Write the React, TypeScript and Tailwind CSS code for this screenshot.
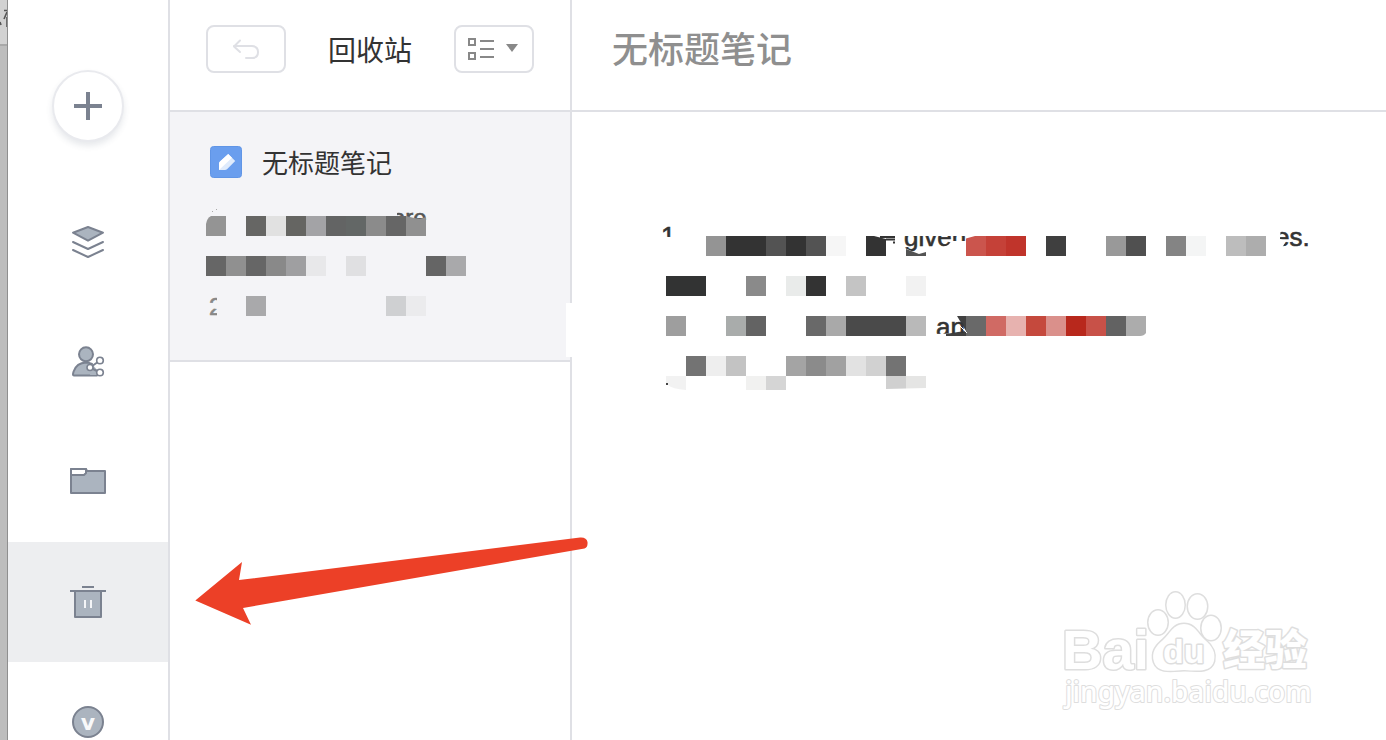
import type { ReactNode } from "react";

type Cell = [x: number, y: number, color: string, w?: number, h?: number];

const previewCells: Cell[] = [
  [246, 216, "#666664"],
  [266, 216, "#e1e1e1"],
  [286, 216, "#656562"],
  [306, 216, "#a3a3a6"],
  [326, 216, "#636464"],
  [346, 216, "#636766"],
  [366, 216, "#8b8b8b"],
  [386, 216, "#666666"],
  [206, 256, "#666666"],
  [226, 256, "#909090"],
  [246, 256, "#666666"],
  [266, 256, "#898989"],
  [286, 256, "#9f9fa1"],
  [306, 256, "#e8e8ea"],
  [346, 256, "#e0e0e2"],
  [426, 256, "#656565"],
  [446, 256, "#a9a9ab"],
  [246, 296, "#a9a9ab"],
  [386, 296, "#cfd0d2"],
  [406, 296, "#ebebed"],
];

const noteCells: Cell[] = [
  [706, 236, "#949494"],
  [726, 236, "#333333", 40],
  [766, 236, "#535353"],
  [786, 236, "#333333"],
  [806, 236, "#535353"],
  [826, 236, "#f6f6f6"],
  [1006, 236, "#c0342b"],
  [986, 236, "#c54138"],
  [1046, 236, "#3f3f3f"],
  [1106, 236, "#999999"],
  [1126, 236, "#505050"],
  [1166, 236, "#848484"],
  [1186, 236, "#f4f5f5"],
  [1226, 236, "#bdbdbd"],
  [1246, 236, "#adadad"],
  [666, 276, "#323333", 40],
  [746, 276, "#8a8a8a"],
  [786, 276, "#e9ebea"],
  [806, 276, "#333333"],
  [846, 276, "#c4c4c4"],
  [906, 276, "#f2f2f2"],
  [666, 316, "#9e9e9e"],
  [726, 316, "#a9acab"],
  [746, 316, "#636363"],
  [806, 316, "#696969"],
  [826, 316, "#a9a9a9"],
  [846, 316, "#4a4a4a", 60],
  [906, 316, "#b9b9b9"],
  [966, 316, "#696969"],
  [986, 316, "#d06a64"],
  [1006, 316, "#e7b2af"],
  [1026, 316, "#c5493d"],
  [1046, 316, "#da908b"],
  [1066, 316, "#b8281c"],
  [1086, 316, "#c85148"],
  [1106, 316, "#626262"],
  [686, 356, "#737373"],
  [706, 356, "#eeeeee"],
  [726, 356, "#c3c3c3"],
  [786, 356, "#a4a4a4"],
  [806, 356, "#8b8b8b"],
  [826, 356, "#a1a1a1"],
  [846, 356, "#e2e2e2"],
  [866, 356, "#d1d1d1"],
  [886, 356, "#737373"],
  [746, 376, "#f1f1f0", 20, 14],
  [766, 376, "#d5d5d5", 20, 14],
  [886, 376, "#d0d0d0", 20, 14],
  [906, 376, "#e5e5e4", 20, 13],
];

function Cells({ cells }: { cells: Cell[] }) {
  return cells.map(([x, y, color, w = 20, h = 20]) => (
    <rect key={`${x}-${y}`} x={x} y={y} width={w} height={h} fill={color} />
  ));
}

function LayersIcon() {
  return (
    <svg width="36" height="36" viewBox="70 224 36 36" fill="none" stroke="#7b8290" strokeWidth="2" strokeLinejoin="round" strokeLinecap="round">
      <path d="M88 227 L103 232.7 L88 240.7 L73 232.7 Z" fill="#abb4bf" />
      <path d="M73 242 L88 249 L103 242" />
      <path d="M73 250 L88 257 L103 250" />
    </svg>
  );
}

function SharedIcon() {
  return (
    <svg width="36" height="36" viewBox="70 344 36 36" fill="#abb4bf" stroke="#7b8290" strokeWidth="2">
      <path d="M97 375.5 H74 C72.5 375.5 73 373.5 73.6 371.5 C75.5 366 80 362.7 86 362.5 C88 362.5 90 363 92 364" strokeLinecap="round" />
      <path d="M92 364 L98 371 L97 375 H90 Z" stroke="none" />
      <circle cx="86" cy="354.3" r="7" />
      <path d="M100 360.5 L90 367.5 L100 372.5" fill="none" />
      <g fill="#ffffff" strokeWidth="1.6">
        <circle cx="100" cy="360.5" r="3.3" />
        <circle cx="90" cy="367.5" r="3" />
        <circle cx="100" cy="372.5" r="3.3" />
      </g>
    </svg>
  );
}

function FolderIcon() {
  return (
    <svg width="36" height="36" viewBox="70 464 36 36" fill="#abb4bf" stroke="#7b8290" strokeWidth="2" strokeLinejoin="round">
      <path d="M71 469 H86 L87 471 H105 V493 H71 Z" />
      <path d="M71 469 H86 V473 L84 475 H71 Z" fill="#ffffff" />
    </svg>
  );
}

function TrashIcon() {
  return (
    <svg width="36" height="36" viewBox="70 584 36 36" fill="none" stroke="#7b8290" strokeWidth="2" strokeLinejoin="round">
      <path d="M75 591 V617 H101 V591" fill="#abb4bf" />
      <path d="M70 591 H106 M82 587 H94" />
      <path d="M85 600 V608 M91 600 V608" stroke="#f4f5f7" />
    </svg>
  );
}

function VipIcon() {
  return (
    <svg width="36" height="36" viewBox="70 704 36 36">
      <circle cx="88" cy="722" r="15" fill="#abb4bf" stroke="#7b8290" strokeWidth="2" />
      <text x="88" y="730" textAnchor="middle" className="font-['DejaVu_Sans',sans-serif] text-[22px] font-bold" fill="#f8f9fa">
        v
      </text>
    </svg>
  );
}

const navItems: { label: string; icon: ReactNode; active?: boolean }[] = [
  { label: "最新", icon: <LayersIcon /> },
  { label: "共享", icon: <SharedIcon /> },
  { label: "文件夹", icon: <FolderIcon /> },
  { label: "回收站", icon: <TrashIcon />, active: true },
  { label: "会员", icon: <VipIcon /> },
];

function Sidebar() {
  return (
    <aside className="flex w-[162px] shrink-0 flex-col border-r-2 border-[#dfe0e5] bg-white">
      <div className="flex justify-center pt-[70px] pb-10">
        <button
          aria-label="新建"
          className="flex size-[72px] items-center justify-center rounded-full border-2 border-[#e9eaee] bg-white shadow-[0_4px_6px_rgba(60,70,100,0.12)]"
        >
          <svg width="28" height="28" viewBox="0 0 28 28" stroke="#7b8290" strokeWidth="4">
            <path d="M14 0 V28 M0 14 H28" />
          </svg>
        </button>
      </div>
      <nav className="flex flex-col">
        {navItems.map((item) => (
          <a
            key={item.label}
            href="#"
            aria-label={item.label}
            className={`flex h-[120px] shrink-0 items-center justify-center ${item.active ? "bg-[#edeef0]" : ""}`}
          >
            {item.icon}
          </a>
        ))}
      </nav>
    </aside>
  );
}

function NoteCard() {
  return (
    <article className="relative border-b-2 border-[#dfe0e5] bg-[#f4f4f7] px-9 pt-[34px] pb-[42px]">
      <div className="flex items-center gap-5 pl-1">
        <svg width="32" height="32" viewBox="210 146 32 32" className="shrink-0">
          <rect x="210.5" y="146.5" width="31" height="31" rx="3" fill="#6a9eee" stroke="#6095e6" />
          <path d="M228.2 154 L235.2 161 L227 169.3 Q226 170 225 170 H219 V163.5 Q219 162.5 220 161.6 Z" fill="#dfebfc" />
          <path d="M228.2 154 L232 157.7 L219 170 V163.5 Q219 162.5 220 161.6 Z" fill="#ffffff" />
        </svg>
        <h2 className="text-[26px] leading-8 text-[#333333]">无标题笔记</h2>
      </div>
      <svg width="264" height="112" viewBox="206 206 264 112" className="mt-7 block">
        <defs>
          <clipPath id="preview-two">
            <path d="M209 297 H217 V302 L213 306 L209 308 L217 309 V317 H209 Z" />
          </clipPath>
          <clipPath id="preview-are">
            <path d="M397 212 H430 V220 H397 Z" />
          </clipPath>
        </defs>
        <Cells cells={previewCells} />
        <path d="M206 236 V224 Q207 218 211 216 H226 V236 Z" fill="#949494" />
        <g className="font-['Liberation_Sans',sans-serif] text-[24px]" fill="#555555" stroke="#555555" strokeWidth="0.6">
          <text x="392" y="226" clipPath="url(#preview-are)">
            are
          </text>
          <text x="209" y="315" fill="#888888" stroke="#888888" clipPath="url(#preview-two)">
            2
          </text>
        </g>
        <path d="M386 216 H406 V236 H386 Z" fill="#666666" />
        <path d="M406 216 L414 218 L420 219 L426 217 V236 H406 Z" fill="#909090" />
        <path d="M212 212 L213 211 M216 210 L217 209" stroke="#aaaaaa" />
      </svg>
      <div className="absolute top-[191px] -right-0.5 h-[54px] w-1.5 bg-white" />
    </article>
  );
}

function NoteList() {
  return (
    <section className="flex w-[402px] shrink-0 flex-col border-r-2 border-[#dfe0e5] bg-white">
      <header className="flex h-[112px] items-center justify-between border-b-2 border-[#dfe0e5] px-9 pb-3">
        <button aria-label="撤销" className="flex h-12 w-20 items-center justify-center rounded-lg border-2 border-[#dfe0e5]">
          <svg width="28" height="22" viewBox="233 37 28 22" fill="none" stroke="#dfe0e5" strokeWidth="2" strokeLinecap="round" strokeLinejoin="round">
            <path d="M241 39.5 L235 45.5 L241 51" />
            <path d="M235 45 H253 Q259 45.5 259 51 Q259 57 253 57 H247" />
          </svg>
        </button>
        <h1 className="text-[28px] leading-10 text-[#333333]">回收站</h1>
        <button
          aria-label="列表视图"
          aria-haspopup="menu"
          className="flex h-12 w-20 items-center justify-center rounded-lg border-2 border-[#dfe0e5]"
        >
          <svg width="52" height="24" viewBox="468 37 52 24" fill="none" stroke="#888888" strokeWidth="2">
            <path d="M469 39 H475 V45 H469 Z M469 53 H475 V59 H469 Z" />
            <path d="M480 41 H494 M480 49 H494 M480 57 H494" />
            <path d="M506 44 H518 L512 52 Z" fill="#888888" stroke="none" />
          </svg>
        </button>
      </header>
      <NoteCard />
    </section>
  );
}

function NoteBody() {
  return (
    <svg width="660" height="180" viewBox="660 216 660 180" className="block">
      <defs>
        <clipPath id="note-one">
          <path d="M660 220 H674 V237 H668 L662 236 Z" />
        </clipPath>
        <clipPath id="note-given">
          <path d="M888 236 H966 V241 H952 L948 245 L936 250 H926 L914 252 L900 246 L888 243 Z" />
        </clipPath>
        <clipPath id="note-an">
          <path d="M934 321 H964 V333 L934 334 Z" />
        </clipPath>
        <clipPath id="note-es">
          <path d="M1281 226 H1312 V250 H1281 L1286 241 L1280 239 Z" />
        </clipPath>
      </defs>
      <Cells cells={noteCells} />
      <path d="M866 236 H874 L886 239 V256 H866 Z" fill="#333333" />
      <path d="M906 249 L919 254 L926 252 V256 H906 Z" fill="#535353" />
      <path d="M966 238.5 L975 236 H986 V256 H966 Z" fill="#cb554d" />
      <path d="M946 334 L958 332 L966 331 V336 H946 Z" fill="#404040" />
      <path d="M957 316 H966 V331 Z" fill="#404040" />
      <path d="M1126 316 H1146 V333 Q1144 336 1140 336 H1126 Z" fill="#acacac" />
      <path d="M666 376 H686 V390 Q672 389 668 385 L666 383 Z" fill="#f2f2f2" />
      <rect x="666" y="383" width="2" height="2" fill="#444444" />
      <path d="M886 389 L926 388 V391 H886 Z" fill="#ffffff" />
      <g className="font-['Liberation_Sans',sans-serif] text-[26px]" fill="#333333" stroke="#333333" strokeWidth="0.6">
        <text x="661" y="245" clipPath="url(#note-one)">
          1
        </text>
        <text x="904" y="246" clipPath="url(#note-given)">
          given
        </text>
        <text x="936" y="336" clipPath="url(#note-an)">
          an
        </text>
        <text x="1275" y="246" clipPath="url(#note-es)">
          es.
        </text>
        <path d="M880 237 H895 M886 239.5 H895 M893 242.5 H895" fill="none" strokeWidth="2" />
      </g>
      <path d="M960 326 L967 333" stroke="#ffffff" />
    </svg>
  );
}

function Editor() {
  return (
    <main className="flex min-w-0 flex-1 flex-col bg-white">
      <header className="flex h-[112px] items-center border-b-2 border-[#dfe0e5] px-10 pb-4">
        <input
          aria-label="标题"
          placeholder="无标题笔记"
          className="w-full bg-transparent text-4xl font-medium text-[#333333] outline-none placeholder:text-[#8f8f8f]"
        />
      </header>
      <div className="px-[88px] py-[104px]">
        <NoteBody />
      </div>
    </main>
  );
}

function Watermark() {
  return (
    <svg
      width="270"
      height="140"
      viewBox="1054 580 270 140"
      className="pointer-events-none absolute right-[62px] bottom-5"
      fill="#ffffff"
      stroke="#dedede"
      strokeWidth="3"
      strokeLinejoin="round"
      paintOrder="stroke"
    >
      <ellipse cx="1175.5" cy="605" rx="9" ry="12.5" />
      <ellipse cx="1197.5" cy="606.5" rx="9.5" ry="12" />
      <ellipse cx="1158" cy="622.5" rx="9.5" ry="12" />
      <ellipse cx="1211" cy="628" rx="9.5" ry="12" />
      <path d="M1184 624 C1195 624 1198 634 1205 640 C1212 646 1216 652 1214 661 C1211 672 1200 671 1184 670 C1170 671 1158 673 1154 662 C1151 652 1156 646 1163 640 C1170 634 1173 624 1184 624 Z" />
      <text x="1062" y="669" className="font-['Liberation_Sans',sans-serif] text-[56px] font-bold">
        Bai
      </text>
      <text x="1163" y="663" className="font-['Liberation_Sans',sans-serif] text-[34px] font-bold">
        du
      </text>
      <text x="1223" y="665" className="font-['Noto_Sans_CJK_SC',sans-serif] text-[42px] font-black">
        经验
      </text>
      <text x="1065" y="702" strokeWidth="2" className="font-['Noto_Sans',sans-serif] text-[28px] font-medium">
        jingyan.baidu.com
      </text>
    </svg>
  );
}

function Arrow() {
  return (
    <svg width="394" height="90" viewBox="195 536 394 90" className="pointer-events-none absolute top-[536px] left-[195px]">
      <path
        d="M195.3 600.5 L242 562 L239 580 L580 537.5 Q586.5 537 587.5 542 Q588 547.5 584.5 548.5 L243 608 L251 624.7 Z"
        fill="#ec4027"
      />
    </svg>
  );
}

export default function App() {
  return (
    <div className="relative flex h-screen overflow-hidden bg-white font-['Noto_Sans_CJK_SC',sans-serif]">
      <div className="w-2 shrink-0 border-r border-[#8f8f8f] bg-[#bdbdbd]">
        <svg width="7" height="46" viewBox="0 0 7 46" className="block">
          <rect width="7" height="46" fill="#d2d2d2" />
          <path d="M0 45 H7" stroke="#a8a8a8" strokeWidth="2" />
          <path d="M4 10.5 H7 M7 12 L4 19 M7 17 V27 M0 22 L1 25" stroke="#555555" strokeWidth="1.6" fill="none" />
        </svg>
      </div>
      <Sidebar />
      <NoteList />
      <Editor />
      <Arrow />
      <Watermark />
    </div>
  );
}
